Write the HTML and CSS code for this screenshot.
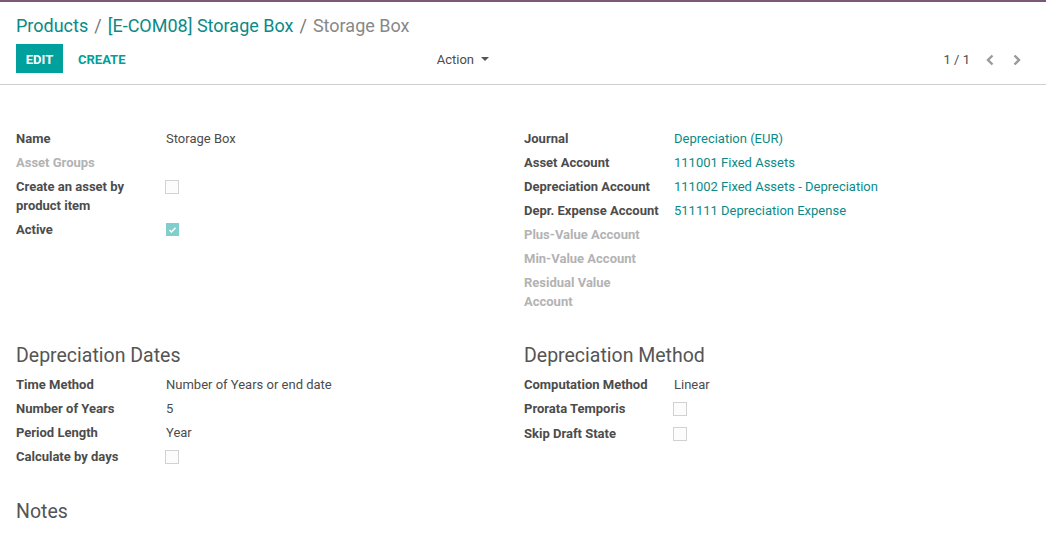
FILE: index.html
```html
<!DOCTYPE html>
<html>
<head>
<meta charset="utf-8">
<link rel="stylesheet" href="styles.css">
</head>
<body>
<div class="navbar-edge"></div>
<div class="control-panel">
  <div class="breadcrumb">
    <a class="crumb-link">Products</a><span class="sep">/</span><a class="crumb-link">[E-COM08] Storage Box</a><span class="sep">/</span><span class="crumb-active">Storage Box</span>
  </div>
  <div class="cp-bottom">
    <div class="cp-left">
      <div class="cp-buttons">
        <button class="btn btn-primary">EDIT</button>
        <button class="btn btn-secondary">CREATE</button>
      </div>
      <div class="cp-sidebar">
        <button class="btn-action">Action <span class="caret"></span></button>
      </div>
    </div>
    <div class="cp-right">
      <span class="pager-value">1 / 1</span>
      <button class="pager-btn" aria-label="Previous"><svg width="8" height="12" viewBox="0 0 8 12"><polyline points="6.5,1.5 2,6 6.5,10.5" fill="none" stroke="#9a9a9a" stroke-width="2.4"/></svg></button>
      <button class="pager-btn" aria-label="Next"><svg width="8" height="12" viewBox="0 0 8 12"><polyline points="1.5,1.5 6,6 1.5,10.5" fill="none" stroke="#9a9a9a" stroke-width="2.4"/></svg></button>
    </div>
  </div>
</div>

<div class="sheet">
  <div class="columns">
    <div class="group">
      <div class="row"><div class="label">Name</div><div class="value">Storage Box</div></div>
      <div class="row"><div class="label muted">Asset Groups</div><div class="value"></div></div>
      <div class="row"><div class="label">Create an asset by product item</div><div class="value"><span class="checkbox"></span></div></div>
      <div class="row"><div class="label">Active</div><div class="value"><span class="checkbox checked"><svg width="9" height="8" viewBox="0 0 9 8"><polyline points="1.5,4.2 3.5,6 7.5,1.8" fill="none" stroke="#fff" stroke-width="1.6"/></svg></span></div></div>
    </div>
    <div class="group">
      <div class="row"><div class="label">Journal</div><div class="value link">Depreciation (EUR)</div></div>
      <div class="row"><div class="label">Asset Account</div><div class="value link">111001 Fixed Assets</div></div>
      <div class="row"><div class="label">Depreciation Account</div><div class="value link">111002 Fixed Assets - Depreciation</div></div>
      <div class="row"><div class="label">Depr. Expense Account</div><div class="value link">511111 Depreciation Expense</div></div>
      <div class="row"><div class="label muted">Plus-Value Account</div><div class="value"></div></div>
      <div class="row"><div class="label muted">Min-Value Account</div><div class="value"></div></div>
      <div class="row"><div class="label muted">Residual Value Account</div><div class="value"></div></div>
    </div>
  </div>

  <div class="columns section">
    <div class="group">
      <h2 class="heading">Depreciation Dates</h2>
      <div class="row"><div class="label">Time Method</div><div class="value">Number of Years or end date</div></div>
      <div class="row"><div class="label">Number of Years</div><div class="value">5</div></div>
      <div class="row"><div class="label">Period Length</div><div class="value">Year</div></div>
      <div class="row cb-row"><div class="label">Calculate by days</div><div class="value"><span class="checkbox"></span></div></div>
    </div>
    <div class="group">
      <h2 class="heading">Depreciation Method</h2>
      <div class="row"><div class="label">Computation Method</div><div class="value">Linear</div></div>
      <div class="row cb-row"><div class="label">Prorata Temporis</div><div class="value"><span class="checkbox"></span></div></div>
      <div class="row cb-row"><div class="label">Skip Draft State</div><div class="value"><span class="checkbox"></span></div></div>
    </div>
  </div>

  <h2 class="heading notes">Notes</h2>
</div>
</body>
</html>
```

FILE: styles.css
```css
* { box-sizing: border-box; }

body {
  margin: 0;
  font-family: Roboto, "Liberation Sans", sans-serif;
  font-size: 13px;
  color: #4c4c4c;
  background: #fff;
}

.navbar-edge {
  height: 2px;
  background: #7b5873;
}

.control-panel {
  padding: 12px 16px 11px;
  border-bottom: 1px solid #cfcfcf;
}

.breadcrumb {
  font-size: 18px;
  line-height: 24px;
  white-space: nowrap;
}

.crumb-link {
  color: #0a8a87;
}

.sep {
  color: #777;
  padding: 0 6px;
}

.crumb-active {
  color: #888;
}

.cp-bottom {
  display: flex;
  margin-top: 6px;
  height: 29px;
  align-items: center;
}

.cp-left {
  width: 50%;
  display: flex;
  justify-content: space-between;
  align-items: center;
}

.cp-buttons {
  display: flex;
  gap: 5px;
}

.btn {
  font-family: Roboto, "Liberation Sans", sans-serif;
  font-size: 13px;
  font-weight: bold;
  height: 29px;
  padding: 1px 10px 0;
  border: none;
  border-radius: 0;
  cursor: pointer;
}

.btn-primary {
  background: #00a09d;
  color: #fff;
  width: 47px;
  padding: 1px 0 0;
}

.btn-secondary {
  background: transparent;
  color: #00a09d;
}

.cp-sidebar {
  padding-right: 34px;
}

.btn-action {
  font-family: Roboto, "Liberation Sans", sans-serif;
  font-size: 13px;
  color: #4c4c4c;
  background: transparent;
  border: none;
  padding: 2px 0 0;
  display: flex;
  align-items: center;
  gap: 4px;
}

.caret {
  display: inline-block;
  width: 0;
  height: 0;
  border-top: 4px solid #555;
  border-left: 4px solid transparent;
  border-right: 4px solid transparent;
  margin-left: 3px;
  margin-top: -2px;
}

.cp-right {
  width: 50%;
  display: flex;
  justify-content: flex-end;
  align-items: center;
  padding-top: 2px;
}

.pager-value {
  margin-right: 6px;
  color: #4c4c4c;
}

.pager-btn {
  width: 27px;
  height: 27px;
  background: transparent;
  border: none;
  padding: 0;
  display: flex;
  align-items: center;
  justify-content: center;
}

.sheet {
  padding: 44px 16px 20px;
}

.columns {
  display: grid;
  grid-template-columns: 508px 1fr;
}

.section {
  margin-top: 28px;
}

.row {
  display: flex;
  padding-bottom: 5px;
}

.label {
  width: 150px;
  flex: none;
  padding-right: 12px;
  font-weight: bold;
  line-height: 19px;
  color: #4c4c4c;
}

.label.muted {
  color: #b3b3b3;
}

.value {
  line-height: 19px;
  color: #4c4c4c;
}

.value.link {
  color: #0a8a87;
}

.cb-row .value {
  height: 20px;
}

.checkbox {
  display: block;
  width: 14px;
  height: 14px;
  margin-top: 3px;
  margin-left: -1px;
  border: 1px solid #d2d2d2;
  background: #fcfcfc;
}

.checkbox.checked {
  width: 13px;
  height: 13px;
  margin-left: 0;
  border-color: #80cfcc;
  background: #80cfcc;
  display: flex;
  align-items: center;
  justify-content: center;
}

.heading {
  font-size: 19.5px;
  font-weight: normal;
  line-height: 23px;
  margin: 0 0 8px;
  color: #555;
}

.notes {
  margin-top: 28px;
}
```
